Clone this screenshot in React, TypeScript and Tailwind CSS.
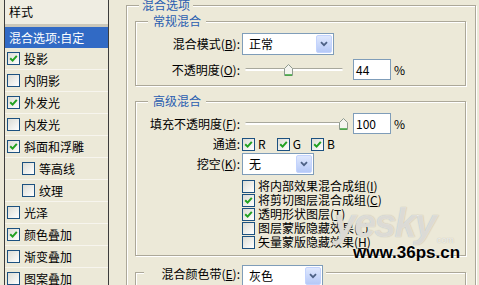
import type { ReactNode } from "react";

const layers = [
  { label: "投影", checked: true },
  { label: "内阴影", checked: false },
  { label: "外发光", checked: true },
  { label: "内发光", checked: false },
  { label: "斜面和浮雕", checked: true },
  { label: "等高线", checked: false, sub: true },
  { label: "纹理", checked: false, sub: true },
  { label: "光泽", checked: false },
  { label: "颜色叠加", checked: true },
  { label: "渐变叠加", checked: false },
  { label: "图案叠加", checked: false },
];

function Check({ checked }: { checked: boolean }) {
  return (
    <span className="flex h-[13px] w-[13px] shrink-0 items-center justify-center border border-[#1c5180] bg-linear-to-br from-[#dcdcd5] to-white">
      {checked && (
        <svg width="9" height="9" viewBox="0 0 9 9">
          <path d="M1.2 4.2 L3.6 6.6 L7.8 1.8" stroke="#21a121" strokeWidth="2" fill="none" />
        </svg>
      )}
    </span>
  );
}

function Select({ value, width }: { value: string; width: string }) {
  return (
    <div className={`ml-[2px] flex h-[22px] shrink-0 items-center border border-[#7f9db9] bg-white ${width}`}>
      <span className="flex-1 pl-[6px] leading-[14px]">{value}</span>
      <span className="mr-[1px] flex h-[18px] w-[16px] items-center justify-center rounded-[2px] border border-[#c3d3fd] bg-linear-to-b from-[#dfe8fd] to-[#b6c9f7]">
        <svg width="8" height="6" viewBox="0 0 8 6">
          <path d="M1 1.2 L4 4.2 L7 1.2" stroke="#4d6185" strokeWidth="1.8" fill="none" />
        </svg>
      </span>
    </div>
  );
}

function Slider({ value }: { value: number }) {
  // track runs 3px..101px inside the 108px box
  const left = 3 + (value / 100) * 98 - 4.5;
  return (
    <div className="relative ml-[2px] h-[21px] w-[108px] shrink-0">
      <div className="absolute left-[3px] right-[7px] top-[9px] h-[3px] rounded-[2px] border-t border-[#a8a89c] bg-white" />
      <svg className="absolute top-[5px]" style={{ left }} width="9" height="12" viewBox="0 0 9 12">
        <path d="M4.5 0.5 L8.5 4.5 V11.5 H0.5 V4.5 Z" fill="#f4f4ef" stroke="#8f9a8f" />
        <path d="M1 11 H8" stroke="#3aa53a" strokeWidth="1.5" />
      </svg>
    </div>
  );
}

function NumBox({ value }: { value: string }) {
  return (
    <div className="ml-[3px] flex h-[21px] w-[38px] shrink-0 items-center border border-[#7f9db9] bg-white pl-[2px] leading-[14px]">
      {value}
    </div>
  );
}

function Label({ children }: { children: ReactNode }) {
  return <div className="w-[104px] shrink-0 text-right leading-[14px]">{children}</div>;
}

const frame =
  "border border-[#aca899] shadow-[inset_1px_1px_0_#fff,1px_1px_0_#fff]";
const legendCls = "bg-[#ece9d8] text-[#2a5db0]";

export default function App() {
  return (
    <div className="relative flex h-[285px] w-[479px] overflow-hidden bg-[#ece9d8] font-['Noto_Sans_CJK_SC','Liberation_Sans',sans-serif] text-[12px] text-black">
      {/* Style list */}
      <div className="ml-[4px] w-[105px] shrink-0 border-x border-[#3c3c3c] bg-[#ece9d8]">
        <div className="flex h-[27px] items-center border-b-[3px] border-[#cbc8ba] bg-[#efede2] pl-[4px]">样式</div>
        <div className="flex h-[21px] items-center bg-[#316ac5] pl-[4px] text-white">混合选项:自定</div>
        {layers.map((l) => (
          <div
            key={l.label}
            className={`flex h-[22px] items-center border-b border-[#f7f5ee] ${l.sub ? "pl-[17px]" : "pl-[2px]"}`}
          >
            <Check checked={l.checked} />
            <span className="ml-[4px] leading-[14px]">{l.label}</span>
          </div>
        ))}
      </div>

      {/* Blending options */}
      <fieldset className={`ml-[17px] w-[350px] shrink-0 self-start pb-[40px] ${frame}`}>
        <legend className={`ml-[12px] h-[10px] px-[3px] leading-[10px] ${legendCls}`}>混合选项</legend>

        <fieldset className={`ml-[8px] mt-[5px] w-[331px] pb-[5px] ${frame}`}>
          <legend className={`ml-[12px] h-[12px] px-[5px] leading-[12px] ${legendCls}`}>常规混合</legend>
          <div className="mt-[6px] flex h-[22px] items-center">
            <Label>
              混合模式(<u>B</u>):
            </Label>
            <Select value="正常" width="w-[92px]" />
          </div>
          <div className="mt-[4px] flex h-[21px] items-center">
            <Label>
              不透明度(<u>O</u>):
            </Label>
            <Slider value={44} />
            <NumBox value="44" />
            <span className="ml-[3px]">%</span>
          </div>
        </fieldset>

        <fieldset className={`ml-[8px] mt-[9px] w-[331px] pb-[6px] ${frame}`}>
          <legend className={`ml-[12px] h-[12px] px-[5px] leading-[12px] ${legendCls}`}>高级混合</legend>
          <div className="mt-[6px] flex h-[21px] items-center">
            <Label>
              填充不透明度(<u>F</u>):
            </Label>
            <Slider value={100} />
            <NumBox value="100" />
            <span className="ml-[3px]">%</span>
          </div>
          <div className="mt-[3px] flex h-[14px] items-center">
            <Label>通道:</Label>
            <span className="ml-[2px]">
              <Check checked />
            </span>
            <span className="ml-[3px]">R</span>
            <span className="ml-[11px]">
              <Check checked />
            </span>
            <span className="ml-[3px]">G</span>
            <span className="ml-[10px]">
              <Check checked />
            </span>
            <span className="ml-[3px]">B</span>
          </div>
          <div className="mt-[2px] flex h-[22px] items-center">
            <Label>
              挖空(<u>K</u>):
            </Label>
            <Select value="无" width="w-[72px]" />
          </div>
          <div className="ml-[106px] mt-[4px]">
            {[
              { t: "将内部效果混合成组", k: "I", c: false },
              { t: "将剪切图层混合成组", k: "C", c: true },
              { t: "透明形状图层", k: "T", c: true },
              { t: "图层蒙版隐藏效果", k: "L", c: false },
              { t: "矢量蒙版隐藏效果", k: "H", c: false },
            ].map((o) => (
              <div key={o.k} className="flex h-[14px] items-center">
                <Check checked={o.c} />
                <span className="ml-[3px] leading-[14px]">
                  {o.t}(<u>{o.k}</u>)
                </span>
              </div>
            ))}
          </div>
        </fieldset>

        <fieldset className={`ml-[8px] mt-[9px] w-[331px] pb-[20px] ${frame}`}>
          <legend className="ml-[8px] h-[14px] bg-[#ece9d8] pr-[3px]">
            <div className="flex items-start">
              <div className="mt-[2px] w-[96px] text-right leading-[14px]">
                混合颜色带(<u>E</u>):
              </div>
              <Select value="灰色" width="w-[81px]" />
            </div>
          </legend>
        </fieldset>
      </fieldset>

      {/* Watermark */}
      <div className="pointer-events-none absolute left-[334px] top-[203px] font-['Liberation_Sans',sans-serif] text-[40px] font-bold italic leading-none tracking-[-2px] text-white/60 [text-shadow:0_0_1px_#a9a698]">
        yesky
      </div>
      <div className="pointer-events-none absolute left-[437px] top-[236px] font-['Liberation_Sans',sans-serif] text-[9px] leading-none text-white/80 [text-shadow:0_0_1px_#a9a698]">
        com
      </div>
      <div className="pointer-events-none absolute left-[353px] top-[244px] font-['Liberation_Sans',sans-serif] text-[17px] font-bold leading-[17px] text-black [text-shadow:0_0_2px_#fff]">
        www.36ps.cn
      </div>
    </div>
  );
}
